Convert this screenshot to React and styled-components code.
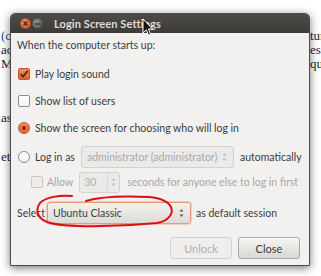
import React from "react";
import styled, { createGlobalStyle } from "styled-components";

const GlobalStyle = createGlobalStyle`
  html, body {
    margin: 0;
    padding: 0;
    background: #ffffff;
  }
  body {
    width: 321px;
    height: 276px;
    overflow: hidden;
  }
`;

// desktop behind the dialog

const Page = styled.div`
  position: relative;
  width: 321px;
  height: 276px;
  overflow: hidden;
  background: #ffffff;
`;

const Paper = styled.div`
  display: flex;
  flex-direction: column;
  padding-top: 29px;
  font-family: "Liberation Serif", serif;
  font-size: 13px;
  color: #1d1d38;
`;

const PaperLine = styled.div`
  display: flex;
  justify-content: space-between;
  height: 14px;
  line-height: 14px;
  margin-top: ${(p) => p.$gap || 0}px;
  white-space: nowrap;
`;

const PaperLeft = styled.span`
  padding-left: 1px;
  color: ${(p) => (p.$link ? "#2b4c9e" : "inherit")};
`;

const PaperRight = styled.span`
  width: 11px;
  overflow: hidden;
`;

// the dialog window

const Window = styled.div`
  position: absolute;
  left: 10px;
  top: 13px;
  width: 300px;
  height: 253px;
  box-sizing: border-box;
  display: flex;
  flex-direction: column;
  background: #f2f1f0;
  border: 1px solid #4b4a46;
  border-radius: 5px 5px 0 0;
  box-shadow: 0 2px 9px rgba(0, 0, 0, 0.55);
  font-family: Lato, "Liberation Sans", sans-serif;
  font-size: 10.5px;
  color: #3c3c3c;
`;

const TitleBar = styled.div`
  display: flex;
  align-items: center;
  height: 19px;
  padding-left: 9px;
  background: linear-gradient(#4c4b47, #3c3b37);
  border-radius: 4px 4px 0 0;
`;

const TitleButton = styled.span`
  display: flex;
  align-items: center;
  justify-content: center;
  width: 11px;
  height: 11px;
  margin-right: 1px;
  border-radius: 50%;
  background: ${(p) =>
    p.$close
      ? "radial-gradient(circle at 40% 35%, #f58a62, #e0582c 70%)"
      : "radial-gradient(circle at 40% 35%, #8e8d89, #62615d 70%)"};
  box-shadow: inset 0 0 0 1px rgba(0, 0, 0, 0.25);
`;

const Title = styled.span`
  margin-left: 10px;
  font-weight: 700;
  font-size: 11px;
  color: #dfdbd2;
  letter-spacing: 0.1px;
`;

const Body = styled.div`
  display: flex;
  flex-direction: column;
  padding: 0 9px 0 6px;
`;

const Heading = styled.div`
  margin-top: 4px;
  line-height: 16px;
  height: 16px;
`;

const Row = styled.div`
  display: flex;
  align-items: center;
  height: 22px;
  margin-top: ${(p) => p.$top || 0}px;
  padding-left: ${(p) => p.$indent || 0}px;
  justify-content: ${(p) => (p.$end ? "flex-end" : "flex-start")};
  white-space: nowrap;
  & > * {
    flex-shrink: 0;
  }
`;

const Label = styled.span`
  margin-left: ${(p) => p.$gap || 0}px;
  color: ${(p) => (p.$disabled ? "#a9a7a4" : "#3c3c3c")};
`;

const Check = styled.span`
  display: flex;
  align-items: center;
  justify-content: center;
  width: 12px;
  height: 12px;
  box-sizing: border-box;
  border-radius: 2px;
  border: 1px solid ${(p) => (p.$checked ? "#c4542b" : p.$disabled ? "#c9c7c4" : "#8f8e8b")};
  background: ${(p) =>
    p.$checked
      ? "linear-gradient(#f28b60, #e1622f)"
      : p.$disabled
      ? "#eeedec"
      : "linear-gradient(#ffffff, #f2f2f2)"};
`;

const Radio = styled.span`
  display: flex;
  align-items: center;
  justify-content: center;
  width: 12px;
  height: 12px;
  box-sizing: border-box;
  border-radius: 50%;
  border: 1px solid ${(p) => (p.$checked ? "#c4542b" : "#8f8e8b")};
  background: ${(p) =>
    p.$checked ? "linear-gradient(#f28b60, #e1622f)" : "linear-gradient(#ffffff, #f2f2f2)"};
`;

const RadioDot = styled.span`
  width: 4px;
  height: 4px;
  border-radius: 50%;
  background: #8a2f14;
`;

const Combo = styled.div`
  display: flex;
  align-items: center;
  justify-content: space-between;
  box-sizing: border-box;
  width: ${(p) => p.$width}px;
  height: ${(p) => p.$height || 22}px;
  margin-left: ${(p) => p.$gap || 0}px;
  padding: 0 6px 0 5px;
  border-radius: 3px;
  border: 1px solid ${(p) => (p.$focus ? "#e59a78" : "#d3d1ce")};
  background: ${(p) =>
    p.$disabled ? "#ebeae8" : "linear-gradient(#f3f2f0, #dddbd8)"};
  color: ${(p) => (p.$disabled ? "#aaa8a5" : "#3c3c3c")};
  box-shadow: ${(p) => (p.$focus ? "0 0 0 1px rgba(233, 140, 100, 0.35)" : "none")};
`;

const Spin = styled.div`
  display: flex;
  align-items: center;
  justify-content: space-between;
  box-sizing: border-box;
  width: 41px;
  height: 21px;
  margin-left: ${(p) => p.$gap || 0}px;
  padding: 0 3px 0 4px;
  border-radius: 3px;
  border: 1px solid #d3d1ce;
  background: #ebeae8;
  color: #b0aeab;
`;

const SpinStepper = styled.span`
  display: flex;
  align-items: center;
  height: 100%;
  padding-left: 3px;
  border-left: 1px solid #dddbd8;
`;

const Button = styled.button`
  box-sizing: border-box;
  width: 62px;
  height: 22px;
  margin-left: 6px;
  border-radius: 3px;
  font-family: Lato, "Liberation Sans", sans-serif;
  font-size: 11px;
  border: 1px solid ${(p) => (p.disabled ? "#d4d2cf" : "#a9a7a3")};
  background: ${(p) =>
    p.disabled ? "#efeeec" : "linear-gradient(#f6f5f4, #d9d7d3)"};
  color: ${(p) => (p.disabled ? "#b3b1ae" : "#3c3c3c")};
  box-shadow: ${(p) => (p.disabled ? "none" : "inset 0 1px 0 #ffffff")};
`;

// overlays: annotation and pointer

const Scribble = styled.svg`
  position: absolute;
  left: 0;
  top: 0;
  pointer-events: none;
`;

const Pointer = styled.svg`
  position: absolute;
  left: 142px;
  top: 18px;
  pointer-events: none;
`;

const Arrows = ({ shade }) => (
  <svg width="5" height="10" viewBox="0 0 5 10">
    <path d="M0.5 3.5 L2.5 1 L4.5 3.5 Z" fill={shade} />
    <path d="M0.5 6.5 L2.5 9 L4.5 6.5 Z" fill={shade} />
  </svg>
);

const CheckMark = () => (
  <svg width="10" height="10" viewBox="0 0 10 10">
    <path d="M1.5 5 L4 7.6 L8.7 1.8" fill="none" stroke="#4e2a1c" strokeWidth="1.7" />
  </svg>
);

const paperLines = [
  { left: "(c", right: "tur", gap: 0, link: true },
  { left: "ac", right: "es c", gap: 0 },
  { left: "Ma", right: "que", gap: 0 },
  { left: "as", right: "", gap: 40 },
  { left: "et", right: "", gap: 25 },
];

export default function App() {
  return (
    <Page>
      <GlobalStyle />
      <Paper>
        {paperLines.map((line, index) => (
          <PaperLine key={`line-${index}`} $gap={line.gap}>
            <PaperLeft $link={line.link}>{line.left}</PaperLeft>
            <PaperRight>{line.right}</PaperRight>
          </PaperLine>
        ))}
      </Paper>

      <Window>
        <TitleBar>
          <TitleButton $close>
            <svg width="5" height="5" viewBox="0 0 5 5">
              <path d="M0.5 0.5 L4.5 4.5 M4.5 0.5 L0.5 4.5" stroke="#3a2a24" strokeWidth="1.3" />
            </svg>
          </TitleButton>
          <TitleButton>
            <svg width="6" height="2" viewBox="0 0 6 2">
              <path d="M0 1 H6" stroke="#3a3935" strokeWidth="1.4" />
            </svg>
          </TitleButton>
          <Title>Login Screen Settings</Title>
        </TitleBar>

        <Body>
          <Heading>When the computer starts up:</Heading>

          <Row $top={10} $indent={1}>
            <Check $checked>
              <CheckMark />
            </Check>
            <Label $gap={5}>Play login sound</Label>
          </Row>

          <Row $top={5} $indent={1}>
            <Check />
            <Label $gap={5}>Show list of users</Label>
          </Row>

          <Row $top={5} $indent={1}>
            <Radio $checked>
              <RadioDot />
            </Radio>
            <Label $gap={5}>Show the screen for choosing who will log in</Label>
          </Row>

          <Row $top={7} $indent={1}>
            <Radio />
            <Label $gap={5}>Log in as</Label>
            <Combo $width={153} $gap={6} $disabled>
              <span>administrator (administrator)</span>
              <Arrows shade="#bdbbb8" />
            </Combo>
            <Label $gap={6}>automatically</Label>
          </Row>

          <Row $top={3} $indent={14}>
            <Check $disabled />
            <Label $gap={4} $disabled>
              Allow
            </Label>
            <Spin $gap={6}>
              <span>30</span>
              <SpinStepper>
                <Arrows shade="#bdbbb8" />
              </SpinStepper>
            </Spin>
            <Label $gap={7} $disabled>
              seconds for anyone else to log in first
            </Label>
          </Row>

          <Row $top={9}>
            <Label>Select</Label>
            <Combo $width={144} $gap={2} $focus>
              <span>Ubuntu Classic</span>
              <Arrows shade="#5a5955" />
            </Combo>
            <Label $gap={5}>as default session</Label>
          </Row>

          <Row $top={13} $end>
            <Button disabled>Unlock</Button>
            <Button>Close</Button>
          </Row>
        </Body>
      </Window>

      <Scribble width="321" height="276" viewBox="0 0 321 276">
        <path
          d="M72 196 C60 195 46 197 40 203 C35 210 37 218 47 222 C64 228 118 227 157 223 C168 221 174 214 171 207 C168 201 160 198 149 197 C128 196 102 196 86 201"
          fill="none"
          stroke="#dc0f0f"
          strokeWidth="2"
          strokeLinecap="round"
        />
      </Scribble>

      <Pointer width="12" height="19" viewBox="0 0 12 19">
        <path
          d="M1 1 L1 15 L4.3 11.8 L6.6 17.2 L8.6 16.3 L6.4 11 L10.6 11 Z"
          fill="#111111"
          stroke="#ffffff"
          strokeWidth="1"
          strokeLinejoin="round"
        />
      </Pointer>
    </Page>
  );
}
